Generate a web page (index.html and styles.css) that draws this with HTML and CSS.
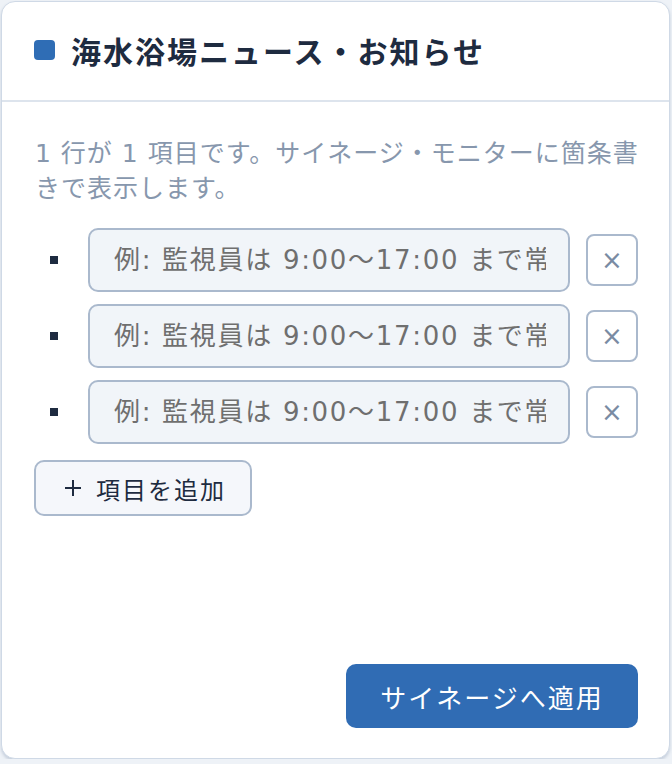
FILE: index.html
```html
<!DOCTYPE html>
<html lang="ja">
<head>
<meta charset="UTF-8" />
<meta name="viewport" content="width=device-width, initial-scale=1" />
<title>海水浴場ニュース・お知らせ</title>
<link rel="stylesheet" href="styles.css">
</head>
<body>

<div class="card">
  <div class="card-header">
    <span class="dot"></span>
    <h2>海水浴場ニュース・お知らせ</h2>
  </div>

  <div class="card-body">
    <p class="hint">1 行が 1 項目です。サイネージ・モニターに箇条書きで表示します。</p>

    <ul class="items" id="items">
      <li class="item">
        <span class="bullet"></span>
        <input type="text" placeholder="例: 監視員は 9:00〜17:00 まで常駐しています">
        <button class="remove" title="削除">&times;</button>
      </li>
      <li class="item">
        <span class="bullet"></span>
        <input type="text" placeholder="例: 監視員は 9:00〜17:00 まで常駐しています">
        <button class="remove" title="削除">&times;</button>
      </li>
      <li class="item">
        <span class="bullet"></span>
        <input type="text" placeholder="例: 監視員は 9:00〜17:00 まで常駐しています">
        <button class="remove" title="削除">&times;</button>
      </li>
    </ul>

    <button class="add" id="add">
      <svg class="plus" width="18" height="18" viewBox="0 0 18 18"><path d="M9 1v16M1 9h16" stroke="currentColor" stroke-width="2" fill="none"/></svg>
      項目を追加
    </button>

    <div class="footer">
      <button class="apply" id="apply">サイネージへ適用</button>
    </div>
  </div>
</div>

</body>
</html>
```

FILE: styles.css
```css
* {
  box-sizing: border-box;
}

body {
  margin: 0;
  padding: 1px 2px 0 1px;
  background: #eef2f7;
  font-family: "DejaVu Sans", "Noto Sans CJK JP", sans-serif;
  color: #1e2b40;
}

.card {
  background: #fff;
  border: 1px solid #cfd9e6;
  border-radius: 14px;
  box-shadow: 0 2px 3px rgba(110, 130, 160, 0.3);
  height: 758px;
  display: flex;
  flex-direction: column;
}

.card-header {
  height: 100px;
  display: flex;
  align-items: center;
  gap: 16px;
  padding: 0 33px 2px 32px;
  border-bottom: 2px solid #dde4ed;
}

.dot {
  width: 21px;
  height: 20px;
  border-radius: 4px;
  background: #2f6db5;
}

.card-header h2 {
  margin: 0;
  font-family: "Noto Sans CJK JP", sans-serif;
  font-size: 30px;
  font-weight: 700;
  letter-spacing: 2px;
  color: #1e2b40;
}

.card-body {
  flex: 1;
  display: flex;
  flex-direction: column;
  padding: 34px 31px 30px 33px;
}

.hint {
  margin: 0 -8px 22px 0;
  font-size: 25px;
  line-height: 35px;
  letter-spacing: 1px;
  color: #8797ad;
}

.items {
  list-style: none;
  margin: 0;
  padding: 0;
  display: flex;
  flex-direction: column;
  gap: 12px;
}

.item {
  display: flex;
  align-items: center;
}

.bullet {
  width: 8px;
  height: 8px;
  background: #1e2b40;
  margin: 0 30px 0 15px;
}

.item input {
  width: 482px;
  height: 64px;
  padding: 0 22px 0 24px;
  border: 2px solid #aab9cd;
  border-radius: 10px;
  background: #f1f5f9;
  font-family: inherit;
  font-size: 26px;
  letter-spacing: 1.7px;
  color: #1e2b40;
}

.item input::placeholder {
  color: #6f6f6f;
}

.remove {
  margin-left: 16px;
  width: 52px;
  height: 52px;
  border: 2px solid #aab9cd;
  border-radius: 8px;
  background: #fff;
  color: #7a8ba3;
  font-family: "DejaVu Sans", sans-serif;
  font-size: 26px;
  line-height: 1;
  cursor: pointer;
}

.add {
  align-self: flex-start;
  display: flex;
  align-items: center;
  gap: 14px;
  margin: 16px 0 0 -1px;
  height: 56px;
  padding: 0 24px 0 28px;
  border: 2px solid #aab9cd;
  border-radius: 10px;
  background: #f5f7fb;
  color: #1e2b40;
  font-family: "Noto Sans CJK JP", sans-serif;
  font-size: 24px;
  letter-spacing: 2px;
  cursor: pointer;
}

.footer {
  margin-top: auto;
  display: flex;
  justify-content: flex-end;
}

.apply {
  width: 292px;
  height: 64px;
  border: none;
  border-radius: 10px;
  background: #306cb4;
  color: #fff;
  font-family: "Noto Sans CJK JP", sans-serif;
  font-size: 26px;
  letter-spacing: 2px;
  cursor: pointer;
}
```
